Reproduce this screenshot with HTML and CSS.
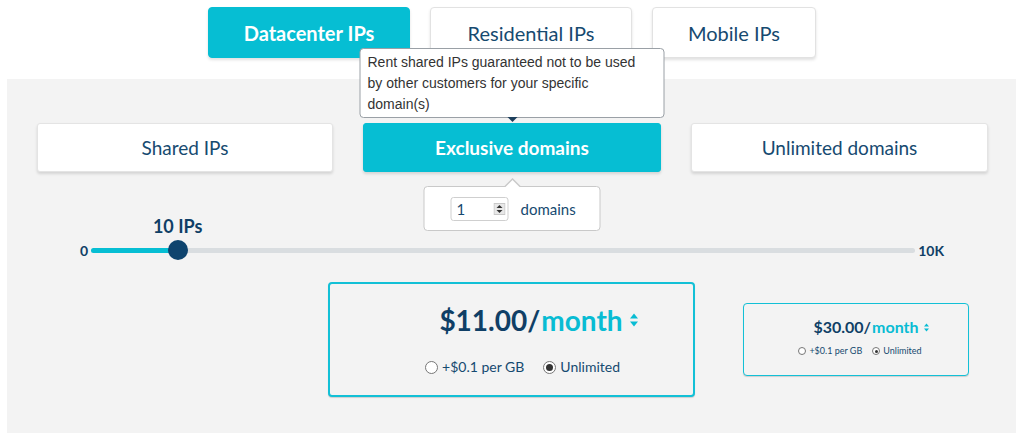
FILE: index.html
```html
<!DOCTYPE html>
<html lang="en">
<head>
<meta charset="utf-8">
<title>Proxy pricing</title>
<link rel="stylesheet" href="styles.css">
</head>
<body>
<nav class="type-tabs">
  <button class="type-tab active">Datacenter IPs</button>
  <button class="type-tab wide">Residential IPs</button>
  <button class="type-tab narrow">Mobile IPs</button>
</nav>
<section class="panel">
  <div class="plan-tabs">
    <button class="plan-tab">Shared IPs</button>
    <div class="plan-slot">
      <button class="plan-tab active">Exclusive domains</button>
      <div class="tooltip">Rent shared IPs guaranteed not to be used by other customers for your specific domain(s)</div>
      <div class="domains-pop">
        <div class="num-input">
          <span>1</span>
          <svg class="spin" viewBox="0 0 12 12" width="12" height="12">
            <rect x="0.5" y="0.5" width="11" height="11" fill="#e8e8e8" stroke="#c8c8c8"/>
            <path d="M3 5 L6 2 L9 5 Z" fill="#333"/>
            <path d="M3 7 L6 10 L9 7 Z" fill="#333"/>
          </svg>
        </div>
        <span class="dom-label">domains</span>
      </div>
    </div>
    <button class="plan-tab">Unlimited domains</button>
  </div>

  <div class="slider-block">
    <span class="edge">0</span>
    <div class="track">
      <div class="fill" style="width:10.5%"></div>
      <div class="thumb" style="left:10.5%"></div>
      <div class="value" style="left:10.5%">10 IPs</div>
    </div>
    <span class="edge">10K</span>
  </div>

  <div class="prices">
    <div class="card main">
      <div class="price"><span class="amt">$11.00/</span><span class="per">month</span>
        <svg class="sort" viewBox="0 0 8 14" width="8" height="14"><path d="M0 5.5 L4 0.5 L8 5.5 Z M0 8.5 L4 13.5 L8 8.5 Z" fill="#08bcd3"/></svg>
      </div>
      <div class="opts">
        <label class="opt"><span class="radio"></span>+$0.1 per GB</label>
        <label class="opt"><span class="radio on"></span>Unlimited</label>
      </div>
    </div>
    <div class="card mini">
      <div class="price"><span class="amt">$30.00/</span><span class="per">month</span>
        <svg class="sort" viewBox="0 0 8 14" width="5" height="9"><path d="M0 5.5 L4 0.5 L8 5.5 Z M0 8.5 L4 13.5 L8 8.5 Z" fill="#08bcd3"/></svg>
      </div>
      <div class="opts">
        <label class="opt"><span class="radio"></span>+$0.1 per GB</label>
        <label class="opt"><span class="radio on"></span>Unlimited</label>
      </div>
    </div>
  </div>
</section>
</body>
</html>
```

FILE: styles.css
```css
* { box-sizing: border-box; }
html, body { margin: 0; padding: 0; background: #fff; }
body { font-family: Lato, "Open Sans", sans-serif; color: #164a70; }

button { font-family: inherit; cursor: pointer; }

.type-tabs {
  display: flex;
  justify-content: center;
  gap: 20px;
  padding-top: 7px;
}
.type-tab {
  width: 202px;
  height: 51px;
  background: #fff;
  border: 1px solid #e2e2e2;
  border-radius: 4px;
  box-shadow: 0 2px 3px rgba(0,0,0,0.12);
  color: #164a70;
  font-size: 20px;
}
.type-tab.narrow { width: 164px; }
.type-tab.active {
  background: #06bed3;
  border-color: #06bed3;
  color: #fff;
  font-weight: 700;
}

.panel {
  margin: 21px 8px 0 7px;
  background: #f3f3f3;
  padding: 44px 28px 36px 30px;
}

.plan-tabs {
  display: grid;
  grid-template-columns: 296px 298px 297px;
  gap: 30px;
}
.plan-slot { position: relative; }
.plan-tab {
  width: 100%;
  height: 49px;
  background: #fff;
  border: 1px solid #e4e4e4;
  border-radius: 3px;
  box-shadow: 0 2px 3px rgba(0,0,0,0.13);
  color: #164a70;
  font-size: 19px;
}
.plan-tab.active {
  background: #06bed3;
  border-color: #06bed3;
  color: #fff;
  font-weight: 700;
}

.tooltip {
  position: absolute;
  left: 50%;
  bottom: calc(100% + 5px);
  transform: translateX(-50%);
  width: 305px;
  padding: 3px 16px 2px 7px;
  background: #fff;
  border: 1px solid #9aa0a6;
  border-radius: 4px;
  font-family: "Liberation Sans", Arial, sans-serif;
  font-size: 14px;
  line-height: 21px;
  color: #333;
}
.tooltip::after {
  content: "";
  position: absolute;
  left: 50%;
  top: 100%;
  margin-left: -5px;
  border: 5px solid transparent;
  border-top-color: #1d3f5c;
  border-bottom: 0;
}

.domains-pop {
  position: absolute;
  top: calc(100% + 14px);
  left: 50%;
  transform: translateX(-50%);
  width: 177px;
  height: 45px;
  background: #fff;
  border: 1px solid #c9c9c9;
  border-radius: 4px;
  display: flex;
  align-items: center;
  gap: 12px;
  padding-left: 26px;
}
.domains-pop::before,
.domains-pop::after {
  content: "";
  position: absolute;
  left: 50%;
  border: 8px solid transparent;
  border-top: 0;
  transform: translateX(-50%);
}
.domains-pop::before { top: -9px; border-bottom-color: #c9c9c9; }
.domains-pop::after { top: -7px; border-bottom-color: #fff; }
.num-input {
  width: 58px;
  height: 24px;
  border: 1px solid #cfcfcf;
  border-radius: 3px;
  display: flex;
  align-items: center;
  justify-content: space-between;
  padding: 0 2px 0 5px;
  font-size: 15px;
  color: #164a70;
}
.dom-label { font-size: 15px; color: #164a70; }

.slider-block {
  display: flex;
  align-items: center;
  gap: 3px;
  margin: 68px 0 0 43px;
  width: 864px;
  height: 20px;
}
.edge { font-size: 14px; font-weight: 700; color: #0f3f66; }
.track {
  position: relative;
  flex: 1;
  height: 5px;
  border-radius: 3px;
  background: #d9dde0;
}
.fill {
  height: 100%;
  border-radius: 3px;
  background: #06bed3;
}
.thumb {
  position: absolute;
  top: 50%;
  width: 20px;
  height: 20px;
  margin: -10px 0 0 -10px;
  border-radius: 50%;
  background: #0e446e;
}
.value {
  position: absolute;
  bottom: 16px;
  transform: translateX(-50%);
  white-space: nowrap;
  font-size: 18px;
  font-weight: 700;
  color: #0f3f66;
}

.prices {
  display: grid;
  grid-template-columns: 1fr 367px 1fr;
  align-items: center;
  margin-top: 22px;
  margin-left: -23px;
  margin-right: -21px;
}
.card {
  background: #f3f3f3;
  border: 2px solid #12c0d6;
  border-radius: 4px;
  box-shadow: 0 1px 1px rgba(0,0,0,0.15);
}
.card.main {
  grid-column: 2;
  height: 115px;
  padding-top: 19px;
}
.card.mini {
  grid-column: 3;
  justify-self: start;
  margin-left: 48px;
  width: 226px;
  height: 73px;
  border-width: 1.5px;
  padding-top: 13px;
}
.price {
  display: flex;
  align-items: center;
  justify-content: center;
  font-weight: 700;
  white-space: nowrap;
}
.main .price { font-size: 28px; line-height: 34px; padding-left: 54px; }
.mini .price { font-size: 16px; line-height: 20px; padding-left: 30px; }
.amt { color: #0f3f66; }
.per { color: #08bcd3; margin-left: 1px; }
.main .sort { margin-left: 7px; }
.mini .sort { margin-left: 5px; }

.opts {
  display: flex;
  justify-content: center;
  align-items: center;
}
.main .opts { margin-top: 20px; gap: 19px; font-size: 14px; line-height: 20px; padding-left: 22px; }
.mini .opts { margin-top: 8px; gap: 10px; font-size: 9px; line-height: 12px; padding-left: 8px; }
.opt { display: flex; align-items: center; color: #164a70; }
.radio {
  display: inline-block;
  border: 1px solid #767676;
  border-radius: 50%;
  background: #fff;
  position: relative;
}
.main .radio { width: 13px; height: 13px; margin-right: 4px; }
.mini .radio { width: 8px; height: 8px; margin-right: 3px; }
.radio.on::after {
  content: "";
  position: absolute;
  inset: 2px;
  border-radius: 50%;
  background: #333;
}
.mini .radio.on::after { inset: 1.5px; }
```
